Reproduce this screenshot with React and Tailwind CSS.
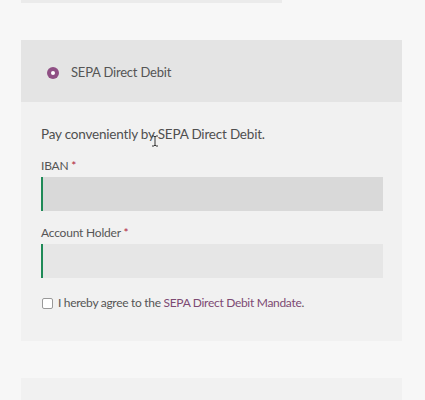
import React from 'react';

const font = { fontFamily: 'Lato, "Open Sans", sans-serif' };

function Field({ label, shade }) {
    return (
        <div>
            <label className="block text-[12px] leading-[18px] tracking-[-0.2px] text-[#555]">
                {label} <span className="text-[#b0243b]">*</span>
            </label>
            <div className={`mt-[2px] h-[34px] w-full border-l-2 border-[#1f8a57] ${shade}`}></div>
        </div>
    );
}

export default function App() {
    return (
        <div className="relative h-[400px] w-[425px] overflow-hidden bg-[#f7f7f7]" style={font}>
            <div className="ml-[21px] h-[3px] w-[261px] bg-[#ebebeb]"></div>

            <div className="ml-[21px] mr-[23px] mt-[37px]">
                <div className="flex h-[62px] items-center bg-[#e4e4e4] pl-[26px] pt-[3px]">
                    <span className="flex h-[12px] w-[12px] items-center justify-center rounded-full bg-[#8f4f84]">
                        <span className="h-[4px] w-[4px] rounded-full bg-white"></span>
                    </span>
                    <span className="ml-[12px] text-[13px] tracking-[-0.2px] text-[#555]">SEPA Direct Debit</span>
                </div>

                <div className="flex h-[239px] flex-col bg-[#f1f1f1] pl-[20px] pr-[19px] pt-[22px]">
                    <p className="text-[13.5px] leading-[20px] tracking-[-0.2px] text-[#4f4f4f]">Pay conveniently by SEPA Direct Debit.</p>
                    <div className="mt-[13px]">
                        <Field label="IBAN" shade="bg-[#d9d9d9]" />
                    </div>
                    <div className="mt-[13px]">
                        <Field label="Account Holder" shade="bg-[#e6e6e6]" />
                    </div>
                    <div className="mt-[16px] flex items-center text-[12px] tracking-[-0.3px] text-[#555]">
                        <span className="ml-px h-[11px] w-[11px] rounded-[2px] border border-[#999] bg-white"></span>
                        <span className="ml-[5px]">
                            I hereby agree to the <span className="text-[#7d4a73]">SEPA Direct Debit Mandate</span>.
                        </span>
                    </div>
                </div>
            </div>

            <div className="ml-[21px] mr-[23px] mt-[37px] h-[30px] bg-[#f1f1f1]"></div>

            <svg className="absolute left-[151px] top-[135px]" width="8" height="12" viewBox="0 0 8 12">
                <path d="M1 1h2l1 1 1-1h2M4 2v8M1 11h2l1-1 1 1h2" fill="none" stroke="#333" strokeWidth="1" />
            </svg>
        </div>
    );
}
